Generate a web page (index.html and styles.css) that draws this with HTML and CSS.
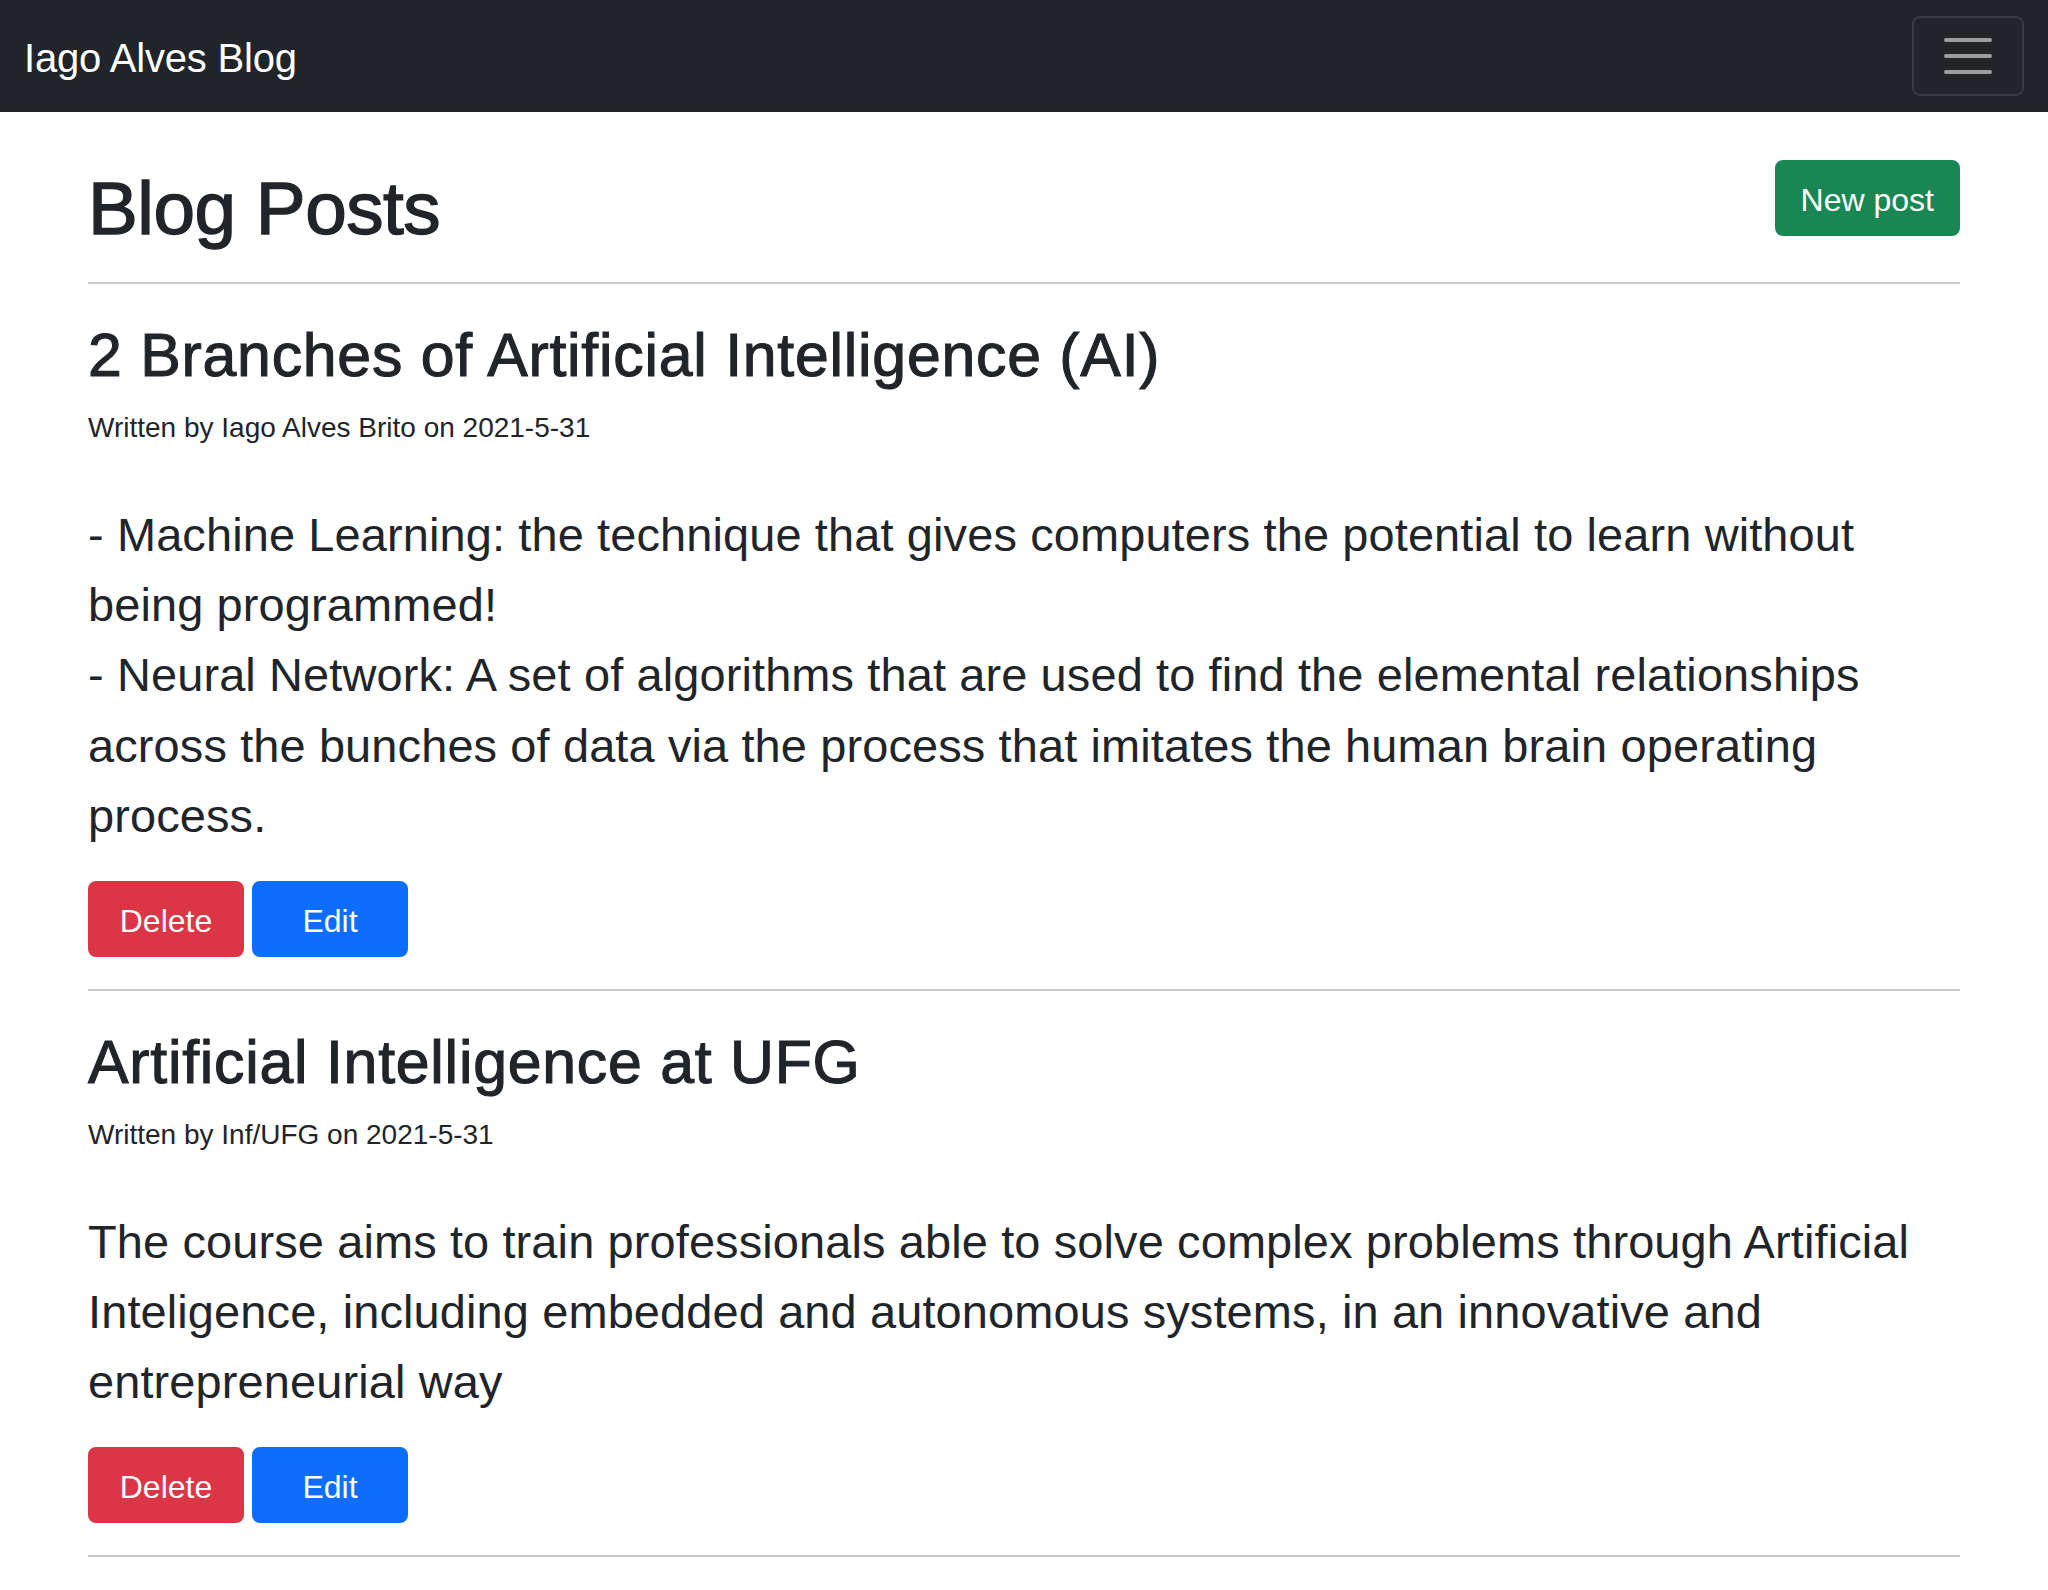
FILE: index.html
```html
<!DOCTYPE html>
<html lang="en">
<head>
<meta charset="utf-8">
<title>Iago Alves Blog</title>
<link rel="stylesheet" href="styles.css">
</head>
<body>
<nav class="navbar">
  <div class="navbar-inner">
    <a class="brand" href="#">Iago Alves Blog</a>
    <button class="toggler" type="button" aria-label="Toggle navigation">
      <svg class="toggler-icon" viewBox="0 0 30 30" width="60" height="60" aria-hidden="true">
        <path stroke="rgba(255,255,255,0.55)" stroke-linecap="round" stroke-miterlimit="10" stroke-width="2" d="M4 7h22M4 15h22M4 23h22"/>
      </svg>
    </button>
  </div>
</nav>
<main class="container">
  <div class="page-header">
    <h1 class="page-title">Blog Posts</h1>
    <a class="btn btn-success" href="#">New post</a>
  </div>
  <hr class="divider">
  <article class="post">
    <h2 class="post-title">2 Branches of Artificial Intelligence (AI)</h2>
    <small class="post-meta">Written by Iago Alves Brito on 2021-5-31</small>
    <p class="post-body">- Machine Learning: the technique that gives computers the potential to learn without being programmed!<br>- Neural Network: A set of algorithms that are used to find the elemental relationships across the bunches of data via the process that imitates the human brain operating process.</p>
    <div class="post-actions">
      <button class="btn btn-danger btn-fixed" type="button">Delete</button>
      <a class="btn btn-primary btn-fixed" href="#">Edit</a>
    </div>
  </article>
  <hr class="divider">
  <article class="post">
    <h2 class="post-title">Artificial Intelligence at UFG</h2>
    <small class="post-meta">Written by Inf/UFG on 2021-5-31</small>
    <p class="post-body">The course aims to train professionals able to solve complex problems through Artificial Inteligence, including embedded and autonomous systems, in an innovative and entrepreneurial way</p>
    <div class="post-actions">
      <button class="btn btn-danger btn-fixed" type="button">Delete</button>
      <a class="btn btn-primary btn-fixed" href="#">Edit</a>
    </div>
  </article>
  <hr class="divider">
</main>
</body>
</html>
```

FILE: styles.css
```css
* {
  box-sizing: border-box;
}

html, body {
  margin: 0;
  padding: 0;
}

body {
  font-family: "Liberation Sans", Arial, sans-serif;
  font-size: 32px;
  line-height: 1.5;
  color: #212529;
  background: #ffffff;
}

/* Navbar */
.navbar {
  background: #212529;
  padding: 16px 0;
}

.navbar-inner {
  display: flex;
  align-items: center;
  justify-content: space-between;
  padding: 0 24px;
}

.brand {
  color: #ffffff;
  text-decoration: none;
  font-size: 40px;
  line-height: 1.5;
  padding: 12px 0 8px;
  margin-right: 32px;
  letter-spacing: -0.2px;
}

.toggler {
  display: flex;
  align-items: center;
  justify-content: center;
  padding: 8px 24px;
  font-size: 40px;
  line-height: 1;
  background: transparent;
  border: 2px solid rgba(255, 255, 255, 0.1);
  border-radius: 8px;
}

.toggler-icon {
  display: block;
  width: 60px;
  height: 60px;
}

/* Main */
.container {
  width: 100%;
  max-width: 1920px;
  margin: 0 auto;
  padding: 0 24px;
}

.page-header {
  display: flex;
  justify-content: space-between;
  align-items: flex-start;
  margin-top: 48px;
}

.page-title {
  margin: 0 0 -4px;
  padding-top: 4px;
  font-size: 74.72px;
  line-height: 1.2;
  font-weight: 500;
  letter-spacing: -0.5px;
  -webkit-text-stroke: 1.4px #212529;
}

.divider {
  margin: 32px 0;
  border: 0;
  border-top: 2px solid #c8c9ca;
  height: 0;
}

.post-title {
  margin: 0 0 12.5px;
  padding-top: 3.5px;
  font-size: 60.8px;
  line-height: 1.2;
  font-weight: 500;
  letter-spacing: 0.75px;
  -webkit-text-stroke: 1.1px #212529;
}

.post-meta {
  display: block;
  font-size: 28px;
  line-height: 1.5;
  padding-top: 2px;
  margin-bottom: 48px;
}

.post-body {
  margin: 0 0 29px;
  padding-top: 3px;
  font-size: 46.94px;
  line-height: 1.5;
  letter-spacing: 0.12px;
}

.post-actions {
  display: flex;
  gap: 8px;
}

/* Buttons */
.btn {
  display: inline-block;
  font-family: inherit;
  font-size: 32px;
  line-height: 1.5;
  font-weight: 400;
  color: #ffffff;
  text-align: center;
  text-decoration: none;
  padding: 14px 24px 10px;
  border: 2px solid transparent;
  border-radius: 8px;
  cursor: pointer;
}

.btn-fixed {
  width: 156px;
  padding-left: 0;
  padding-right: 0;
}

.btn-success {
  background: #198754;
  border-color: #198754;
}

.btn-danger {
  background: #dc3545;
  border-color: #dc3545;
}

.btn-primary {
  background: #0d6efd;
  border-color: #0d6efd;
}
```
